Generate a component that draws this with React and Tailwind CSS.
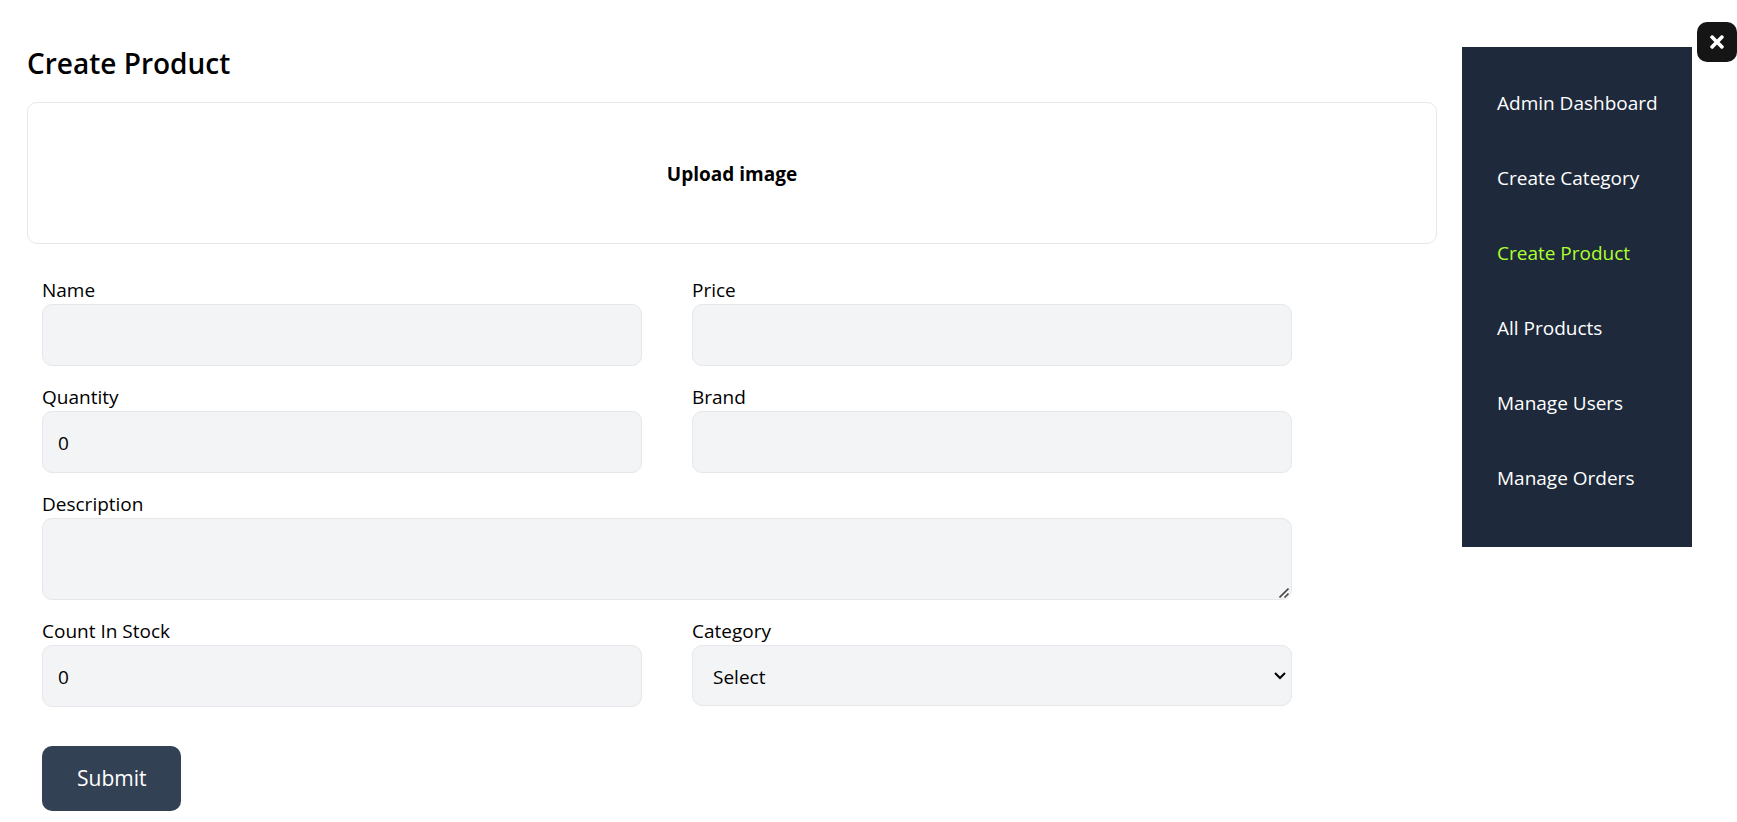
import { FaTimes } from "react-icons/fa";

const links = [
  "Admin Dashboard",
  "Create Category",
  "Create Product",
  "All Products",
  "Manage Users",
  "Manage Orders",
];

const control =
  "block w-full rounded-[10px] border border-gray-200 bg-gray-100 px-[15px] pt-0.5 text-[19px] leading-[30px] text-black";

function Field({ id, label, wide, children }) {
  return (
    <div className={wide ? "col-span-2" : ""}>
      <label htmlFor={id} className="block h-[30px] leading-8">
        {label}
      </label>
      {children}
    </div>
  );
}

export default function App() {
  return (
    <div className="flex items-start bg-white pl-[27px] font-['Open_Sans','Noto_Sans',sans-serif] text-[19px] text-black">
      <main className="min-w-0 flex-1 pt-[41px] pb-[11px]">
        <h1 className="text-[28px] leading-[45px] font-semibold">Create Product</h1>
        <form onSubmit={(e) => e.preventDefault()}>
          <label className="mt-4 flex h-[142px] cursor-pointer items-center justify-center rounded-[10px] border border-gray-200 pt-0.5 leading-[30px] font-bold">
            Upload image
            <input type="file" accept="image/*" className="sr-only" />
          </label>
          <div className="ml-[15px] max-w-[1250px] pt-[30px]">
            <div className="grid grid-cols-2 gap-x-[50px] gap-y-[15px]">
              <Field id="name" label="Name">
                <input id="name" type="text" className={`${control} h-[62px]`} />
              </Field>
              <Field id="price" label="Price">
                <input id="price" type="text" className={`${control} h-[62px]`} />
              </Field>
              <Field id="quantity" label="Quantity">
                <input id="quantity" type="text" inputMode="numeric" defaultValue="0" className={`${control} h-[62px]`} />
              </Field>
              <Field id="brand" label="Brand">
                <input id="brand" type="text" className={`${control} h-[62px]`} />
              </Field>
              <Field id="description" label="Description" wide>
                <div className="relative">
                  <textarea
                    id="description"
                    className={`${control} h-[82px] resize-y pb-2 [&::-webkit-resizer]:bg-transparent`}
                  />
                  <svg
                    aria-hidden="true"
                    viewBox="0 0 10 10"
                    className="pointer-events-none absolute right-[3px] bottom-0.5 size-2.5 text-[#4b4b4b]"
                    fill="none"
                    stroke="currentColor"
                    strokeWidth="1.6"
                  >
                    <path d="M0.5 9.5 9.5 0.5M5.5 9.5 9.5 5.5" />
                  </svg>
                </div>
              </Field>
              <Field id="stock" label="Count In Stock">
                <input id="stock" type="text" inputMode="numeric" defaultValue="0" className={`${control} h-[62px]`} />
              </Field>
              <Field id="category" label="Category">
                <div className="relative">
                  <select id="category" className={`${control} h-[61px] appearance-none pl-5`}>
                    <option>Select</option>
                  </select>
                  <svg
                    aria-hidden="true"
                    viewBox="0 0 12 8"
                    className="pointer-events-none absolute top-[27px] right-1.5 h-2 w-3"
                    fill="none"
                    stroke="currentColor"
                    strokeWidth="2"
                  >
                    <path d="M1 1 6 6 11 1" />
                  </svg>
                </div>
              </Field>
            </div>
            <button
              type="submit"
              className="mt-[39px] block h-[65px] rounded-[10px] bg-[#334155] px-[35px] text-[21px] leading-[35px] text-white"
            >
              Submit
            </button>
          </div>
        </form>
      </main>
      <aside className="mt-[47px] ml-[25px] shrink-0 bg-[#1e293b] px-[35px] pt-[41px] pb-[54px]">
        <nav>
          <ul className="flex w-40 flex-col gap-[45px]">
            {links.map((text) => (
              <li key={text}>
                <a
                  href="#"
                  className={`block leading-[30px] whitespace-nowrap ${text === "Create Product" ? "text-[#adff2f]" : "text-white"}`}
                >
                  {text}
                </a>
              </li>
            ))}
          </ul>
        </nav>
      </aside>
      <button
        type="button"
        aria-label="Close menu"
        className="mt-[22px] ml-[5px] flex size-10 shrink-0 items-center justify-center rounded-[10px] bg-[#151515] text-white"
      >
        <FaTimes size={20} />
      </button>
    </div>
  );
}
